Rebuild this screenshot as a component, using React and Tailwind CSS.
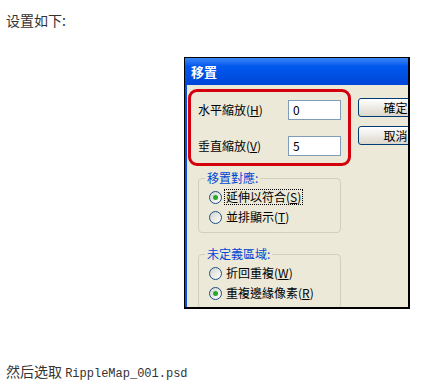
const cjk = { fontFamily: '"Noto Sans CJK SC", "Noto Sans CJK TC", sans-serif' }
const tc = { fontFamily: '"Noto Sans CJK TC", "Noto Sans CJK SC", sans-serif' }

function Radio({ checked }) {
    return (
        <span className="w-[13px] h-[13px] shrink-0 rounded-full border border-[#1c5180] bg-linear-to-br from-[#d4d4cd] to-white flex items-center justify-center">
            {checked && <span className="w-[5px] h-[5px] rounded-full bg-[#2aa82a]" />}
        </span>
    )
}

function RadioRow({ checked, focused, label, hotkey }) {
    const text = (
        <>
            {label}(<u>{hotkey}</u>)
        </>
    )
    return (
        <div className="h-[20px] flex items-center gap-[2px] pl-[10px] text-[12px] text-black">
            <Radio checked={checked} />
            {focused
                ? <span className="border border-dotted border-black px-[1px] leading-[14px] whitespace-nowrap">{text}</span>
                : <span className="px-[2px] leading-[14px] whitespace-nowrap">{text}</span>}
        </div>
    )
}

function Group({ title, children, className }) {
    return (
        <fieldset className={`ml-[10px] w-[143px] border border-[#d0d0bf] rounded-[4px] pt-[2px] pb-[5px] ${className}`}>
            <legend className="ml-[6px] px-[2px] text-[12px] leading-[14px] text-[#0046d5]">{title}</legend>
            {children}
        </fieldset>
    )
}

function ScaleRow({ label, hotkey, value }) {
    return (
        <div className="flex items-center h-[20px]">
            <span className="w-[90px] text-[12px] text-black whitespace-nowrap">{label}(<u>{hotkey}</u>)</span>
            <div className="w-[53px] h-[20px] border border-[#7f9db9] bg-white text-[12px] leading-[18px] pl-[4px] text-black">{value}</div>
        </div>
    )
}

function XpButton({ children }) {
    return (
        <div className="w-[75px] h-[19px] shrink-0 rounded-[3px] border border-[#003c74] bg-linear-to-b from-white to-[#dcd7cb] flex items-center justify-center text-[12px] text-black">
            {children}
        </div>
    )
}

function Dialog() {
    return (
        <div className="ml-[184px] w-[226px] h-[252px] border border-black border-r-2 border-b-2 bg-[#0a4fe0] overflow-hidden flex flex-col" style={tc}>
            <div className="h-[27px] shrink-0 pl-[6px] flex items-center bg-linear-to-b from-[#3a86f5] via-[#0058ee] via-30% to-[#0046d8] text-white text-[13px] font-bold">
                移置
            </div>
            <div className="flex-1 ml-[2px] bg-[#ece9d8] flex items-start pt-[4px] pl-[1px]">
                <div className="flex flex-col shrink-0">
                    <div className="w-[163px] border-[3px] border-[#d4000c] rounded-[9px] pt-[8px] pb-[7px] pl-[7px] flex flex-col gap-[16px]">
                        <ScaleRow label="水平縮放" hotkey="H" value="0" />
                        <ScaleRow label="垂直縮放" hotkey="V" value="5" />
                    </div>
                    <Group title="移置對應:" className="mt-[5px]">
                        <RadioRow checked focused label="延伸以符合" hotkey="S" />
                        <RadioRow label="並排顯示" hotkey="T" />
                    </Group>
                    <Group title="未定義區域:" className="mt-[14px]">
                        <RadioRow label="折回重複" hotkey="W" />
                        <RadioRow checked label="重複邊緣像素" hotkey="R" />
                    </Group>
                </div>
                <div className="ml-[7px] mt-[9px] flex flex-col gap-[9px] shrink-0">
                    <XpButton>確定</XpButton>
                    <XpButton>取消</XpButton>
                </div>
            </div>
        </div>
    )
}

export default function App() {
    return (
        <div className="w-[431px] h-[386px] bg-white overflow-hidden text-[#333]" style={cjk}>
            <p className="pt-[10px] pl-[6px] text-[14px] leading-[20px]">设置如下:</p>
            <div className="mt-[27px]">
                <Dialog />
            </div>
            <p className="mt-[52px] pl-[6px] text-[14px] leading-[20px] whitespace-nowrap">
                然后选取 <span className="text-[12px]" style={{ fontFamily: '"Liberation Mono", monospace' }}>RippleMap_001.psd</span>
            </p>
        </div>
    )
}
